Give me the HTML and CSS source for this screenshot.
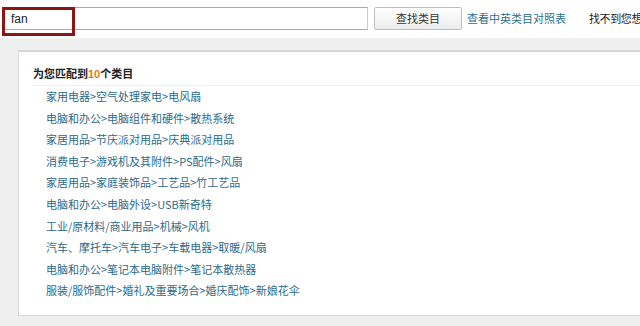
FILE: index.html
```html
<!DOCTYPE html>
<html lang="zh">
<head>
<meta charset="utf-8">
<link rel="stylesheet" href="styles.css">
</head>
<body>
<div class="top">
  <div class="search">
    <span class="q">fan</span>
    <span class="mark"></span>
  </div>
  <button class="btn">查找类目</button>
  <a class="link">查看中英类目对照表</a>
  <span class="miss">找不到您想</span>
</div>
<div class="main">
  <div class="panel">
    <div class="head">为您匹配到<em>10</em>个类目</div>
    <ul class="list">
      <li>家用电器&gt;空气处理家电&gt;电风扇</li>
      <li>电脑和办公&gt;电脑组件和硬件&gt;散热系统</li>
      <li>家居用品&gt;节庆派对用品&gt;庆典派对用品</li>
      <li>消费电子&gt;游戏机及其附件&gt;PS配件&gt;风扇</li>
      <li>家居用品&gt;家庭装饰品&gt;工艺品&gt;竹工艺品</li>
      <li>电脑和办公&gt;电脑外设&gt;USB新奇特</li>
      <li>工业/原材料/商业用品&gt;机械&gt;风机</li>
      <li>汽车、摩托车&gt;汽车电子&gt;车载电器&gt;取暖/风扇</li>
      <li>电脑和办公&gt;笔记本电脑附件&gt;笔记本散热器</li>
      <li>服装/服饰配件&gt;婚礼及重要场合&gt;婚庆配饰&gt;新娘花伞</li>
    </ul>
  </div>
</div>
</body>
</html>
```
FILE: styles.css
```css
html, body {
  margin: 0;
  padding: 0;
  background: #fff;
  overflow: hidden;
  width: 640px;
  height: 326px;
  font-family: "Noto Sans CJK SC", "Liberation Sans", sans-serif;
  font-size: 11px;
}
.top {
  height: 38px;
  display: flex;
  align-items: flex-start;
  white-space: nowrap;
  box-sizing: border-box;
  padding-top: 7px;
}
.top > * {
  flex-shrink: 0;
}
.search {
  position: relative;
  margin-left: 3px;
  width: 365px;
  height: 23px;
  box-sizing: border-box;
  border: 1px solid #a9a9a9;
  border-left-color: #ccc;
  border-right-color: #ccc;
  display: flex;
  align-items: center;
}
.q {
  font-family: "Liberation Sans", Arial, sans-serif;
  font-size: 12px;
  color: #222;
  padding-left: 7px;
}
.mark {
  position: absolute;
  left: -2px;
  top: -1px;
  width: 73px;
  height: 29px;
  box-sizing: border-box;
  border: 3px solid #8c1616;
}
.btn {
  margin-left: 6px;
  width: 88px;
  height: 23px;
  border: 1px solid #bdbdbd;
  border-radius: 2px;
  background: linear-gradient(#ffffff, #ececec);
  font-family: "Noto Sans CJK SC", sans-serif;
  font-size: 11px;
  color: #333;
  padding: 0;
  line-height: 21px;
}
.link {
  margin-left: 5px;
  color: #2b6f8e;
  line-height: 23px;
}
.miss {
  margin-left: 23px;
  color: #222;
  line-height: 23px;
  letter-spacing: -0.4px;
}
.main {
  background: #efefef;
  height: 288px;
  box-sizing: border-box;
  padding: 12px 0 0 18px;
}
.panel {
  background: #fff;
  border: 1px solid #d9d9d9;
  border-top-width: 2px;
  border-right: 0;
  padding: 0 0 13px 14px;
}
.head {
  padding-top: 10px;
  line-height: 22px;
  font-weight: bold;
  color: #222;
  border-bottom: 1px solid #f0f0f0;
}
.head em {
  font-style: normal;
  color: #e07b10;
  font-family: "Liberation Sans", sans-serif;
}
.list {
  list-style: none;
  margin: 0;
  padding: 0 0 0 13px;
}
.list li {
  line-height: 21.6px;
  color: #2d6a86;
}
```
